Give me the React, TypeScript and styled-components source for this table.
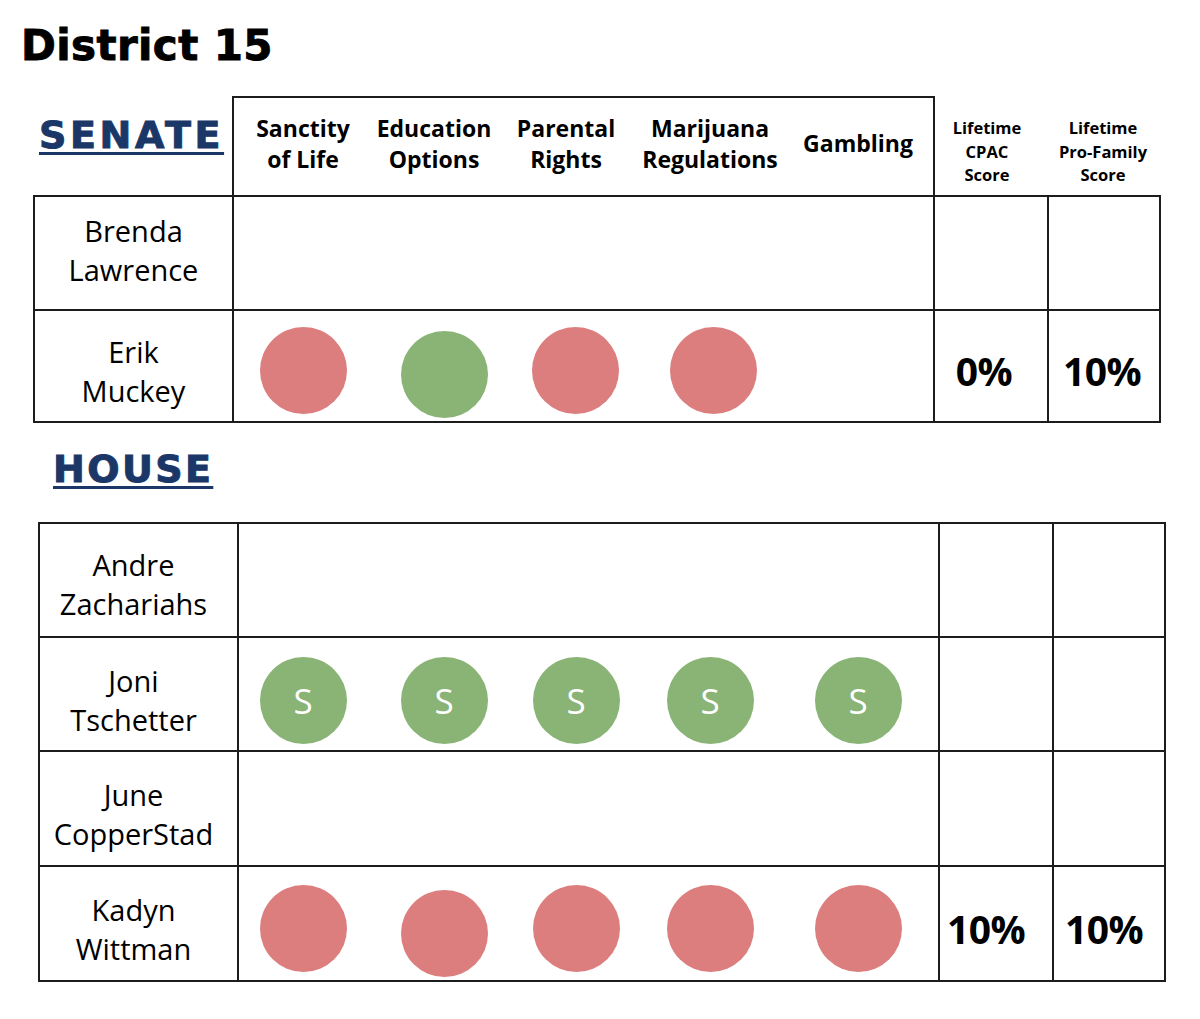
import React from "react";
import styled, { createGlobalStyle } from "styled-components";

const LINE = "#1c1c1c";
const RED = "#dc7e7e";
const GREEN = "#89b476";
const NAVY = "#1b3767";

const Global = createGlobalStyle`
  html, body { margin: 0; padding: 0; background: #ffffff; }
  body { font-family: "Open Sans", "Liberation Sans", sans-serif; color: #000; }
`;

const Page = styled.div`
  width: 1200px;
  height: 1019px;
  box-sizing: border-box;
  padding-top: 22px;
  overflow: hidden;
`;

const Title = styled.h1`
  margin: 0 0 0 21px;
  font-family: "DejaVu Sans", "Liberation Sans", sans-serif;
  font-weight: 700;
  font-size: 42px;
  line-height: 48px;
  letter-spacing: 0.4px;
  color: #000;
  -webkit-text-stroke: 0.9px #000;
`;

const ChamberTitle = styled.h2<{ $top: number; $left: number; $spacing: number }>`
  margin: ${(p) => p.$top}px 0 0 ${(p) => p.$left}px;
  font-family: "DejaVu Sans", "Liberation Sans", sans-serif;
  font-weight: 700;
  font-size: 38px;
  line-height: 44px;
  letter-spacing: ${(p) => p.$spacing}px;
  color: ${NAVY};
  -webkit-text-stroke: 1px ${NAVY};
  text-decoration: underline;
  text-decoration-thickness: 3px;
  text-underline-offset: 4px;
  width: max-content;
`;

const HeadRow = styled.div`
  display: grid;
  grid-template-columns: 199px 703px 112px 112px;
  height: 99px;
  margin: 26px 0 0 33px;
`;

const HeadTitleCell = styled.div`
  padding-top: 17px;
  padding-left: 3px;
`;

const TopicHead = styled.div`
  display: grid;
  grid-template-columns: 138px 124px 140px 148px 148px;
  align-items: center;
  justify-items: center;
  border: 2px solid ${LINE};
  border-bottom: 0;
  box-sizing: border-box;
  padding-bottom: 5px;
`;

const TopicLabel = styled.div<{ $lift?: number }>`
  font-weight: 700;
  font-size: 23px;
  line-height: 31px;
  text-align: center;
  white-space: nowrap;
  margin-bottom: ${(p) => p.$lift ?? 0}px;
`;

const ScoreLabel = styled.div<{ $shift: number }>`
  font-weight: 700;
  font-size: 16.5px;
  line-height: 23.5px;
  text-align: center;
  padding-top: 20px;
  margin-right: ${(p) => p.$shift}px;
`;

const Board = styled.div<{ $left: number; $top: number; $rows: string }>`
  display: grid;
  grid-template-columns: 197px 699px 112px 110px;
  grid-template-rows: ${(p) => p.$rows};
  gap: 2px;
  padding: 2px;
  background: ${LINE};
  width: max-content;
  margin: ${(p) => p.$top}px 0 0 ${(p) => p.$left}px;
`;

const NameCell = styled.div<{ $drop: number; $shift: number }>`
  background: #fff;
  display: flex;
  flex-direction: column;
  align-items: center;
  justify-content: center;
  padding-top: ${(p) => Math.max(p.$drop, 0)}px;
  padding-bottom: ${(p) => Math.max(-p.$drop, 0)}px;
  padding-right: ${(p) => p.$shift}px;
  box-sizing: border-box;
  font-size: 29px;
  line-height: 39px;
  text-align: center;
`;

const TopicCell = styled.div<{ $cols: string; $drop: number }>`
  background: #fff;
  display: grid;
  grid-template-columns: ${(p) => p.$cols};
  align-items: center;
  justify-items: center;
  padding-top: ${(p) => Math.max(p.$drop, 0)}px;
  box-sizing: border-box;
`;

const Dot = styled.span<{ $tone: "r" | "g"; $dy: number }>`
  width: 87px;
  height: 87px;
  border-radius: 50%;
  background: ${(p) => (p.$tone === "r" ? RED : GREEN)};
  display: flex;
  align-items: center;
  justify-content: center;
  color: #fff;
  font-size: 35px;
  font-weight: 400;
  line-height: 1;
  transform: translateY(${(p) => p.$dy}px);
`;

const ScoreCell = styled.div<{ $drop: number; $shift: number }>`
  background: #fff;
  display: flex;
  align-items: center;
  justify-content: center;
  padding-top: ${(p) => Math.max(p.$drop, 0)}px;
  padding-right: ${(p) => p.$shift}px;
  box-sizing: border-box;
  font-size: 39px;
  font-weight: 700;
  letter-spacing: -0.5px;
`;

type Mark = { tone: "r" | "g"; s?: boolean; dy?: number };
type Row = {
  name: [string, string];
  marks: Mark[];
  cpac?: string;
  fam?: string;
  drop: number;
};

const r: Mark = { tone: "r" };
const gs: Mark = { tone: "g", s: true };

const senate: Row[] = [
  { name: ["Brenda", "Lawrence"], marks: [], drop: -7 },
  {
    name: ["Erik", "Muckey"],
    marks: [r, { tone: "g", dy: 4 }, r, r],
    cpac: "0%",
    fam: "10%",
    drop: 9,
  },
];

const house: Row[] = [
  { name: ["Andre", "Zachariahs"], marks: [], drop: 7 },
  { name: ["Joni", "Tschetter"], marks: [gs, gs, gs, gs, gs], drop: 12 },
  { name: ["June", "CopperStad"], marks: [], drop: 10 },
  {
    name: ["Kadyn", "Wittman"],
    marks: [r, { tone: "r", dy: 5 }, r, r, r],
    cpac: "10%",
    fam: "10%",
    drop: 10,
  },
];

const topics: { lines: [string, string?]; lift?: number }[] = [
  { lines: ["Sanctity", "of Life"] },
  { lines: ["Education", "Options"] },
  { lines: ["Parental", "Rights"] },
  { lines: ["Marijuana", "Regulations"] },
  { lines: ["Gambling"], lift: 2 },
];

type Shifts = { name: number; cpac: number; fam: number };

function Rows({ rows, cols, shifts }: { rows: Row[]; cols: string; shifts: Shifts }) {
  return (
    <>
      {rows.map((row) => (
        <React.Fragment key={row.name.join(" ")}>
          <NameCell $drop={row.drop} $shift={shifts.name}>
            <span>{row.name[0]}</span>
            <span>{row.name[1]}</span>
          </NameCell>
          <TopicCell $cols={cols} $drop={row.drop}>
            {row.marks.map((m, i) => (
              <Dot key={i} $tone={m.tone} $dy={m.dy ?? 0}>
                {m.s ? "S" : null}
              </Dot>
            ))}
          </TopicCell>
          <ScoreCell $drop={row.drop} $shift={shifts.cpac}>
            {row.cpac}
          </ScoreCell>
          <ScoreCell $drop={row.drop} $shift={shifts.fam}>
            {row.fam}
          </ScoreCell>
        </React.Fragment>
      ))}
    </>
  );
}

export default function App() {
  return (
    <Page>
      <Global />
      <Title>District 15</Title>

      <HeadRow>
        <HeadTitleCell>
          <ChamberTitle $top={0} $left={3} $spacing={3.6}>
            SENATE
          </ChamberTitle>
        </HeadTitleCell>
        <TopicHead>
          {topics.map((t) => (
            <TopicLabel key={t.lines[0]} $lift={t.lift}>
              {t.lines[0]}
              {t.lines[1] ? (
                <>
                  <br />
                  {t.lines[1]}
                </>
              ) : null}
            </TopicLabel>
          ))}
        </TopicHead>
        <ScoreLabel $shift={8}>
          Lifetime
          <br />
          CPAC
          <br />
          Score
        </ScoreLabel>
        <ScoreLabel $shift={0}>
          Lifetime
          <br />
          Pro-Family
          <br />
          Score
        </ScoreLabel>
      </HeadRow>

      <Board $left={33} $top={0} $rows="112px 110px">
        <Rows
          rows={senate}
          cols="138px 144px 118px 158px 132px 1fr"
          shifts={{ name: 0, cpac: 14, fam: 4 }}
        />
      </Board>

      <ChamberTitle $top={24} $left={53} $spacing={2.4}>
        HOUSE
      </ChamberTitle>

      <Board $left={38} $top={31} $rows="112px 112px 113px 113px">
        <Rows
          rows={house}
          cols="128px 154px 110px 158px 138px 1fr"
          shifts={{ name: 10, cpac: 20, fam: 10 }}
        />
      </Board>
    </Page>
  );
}
